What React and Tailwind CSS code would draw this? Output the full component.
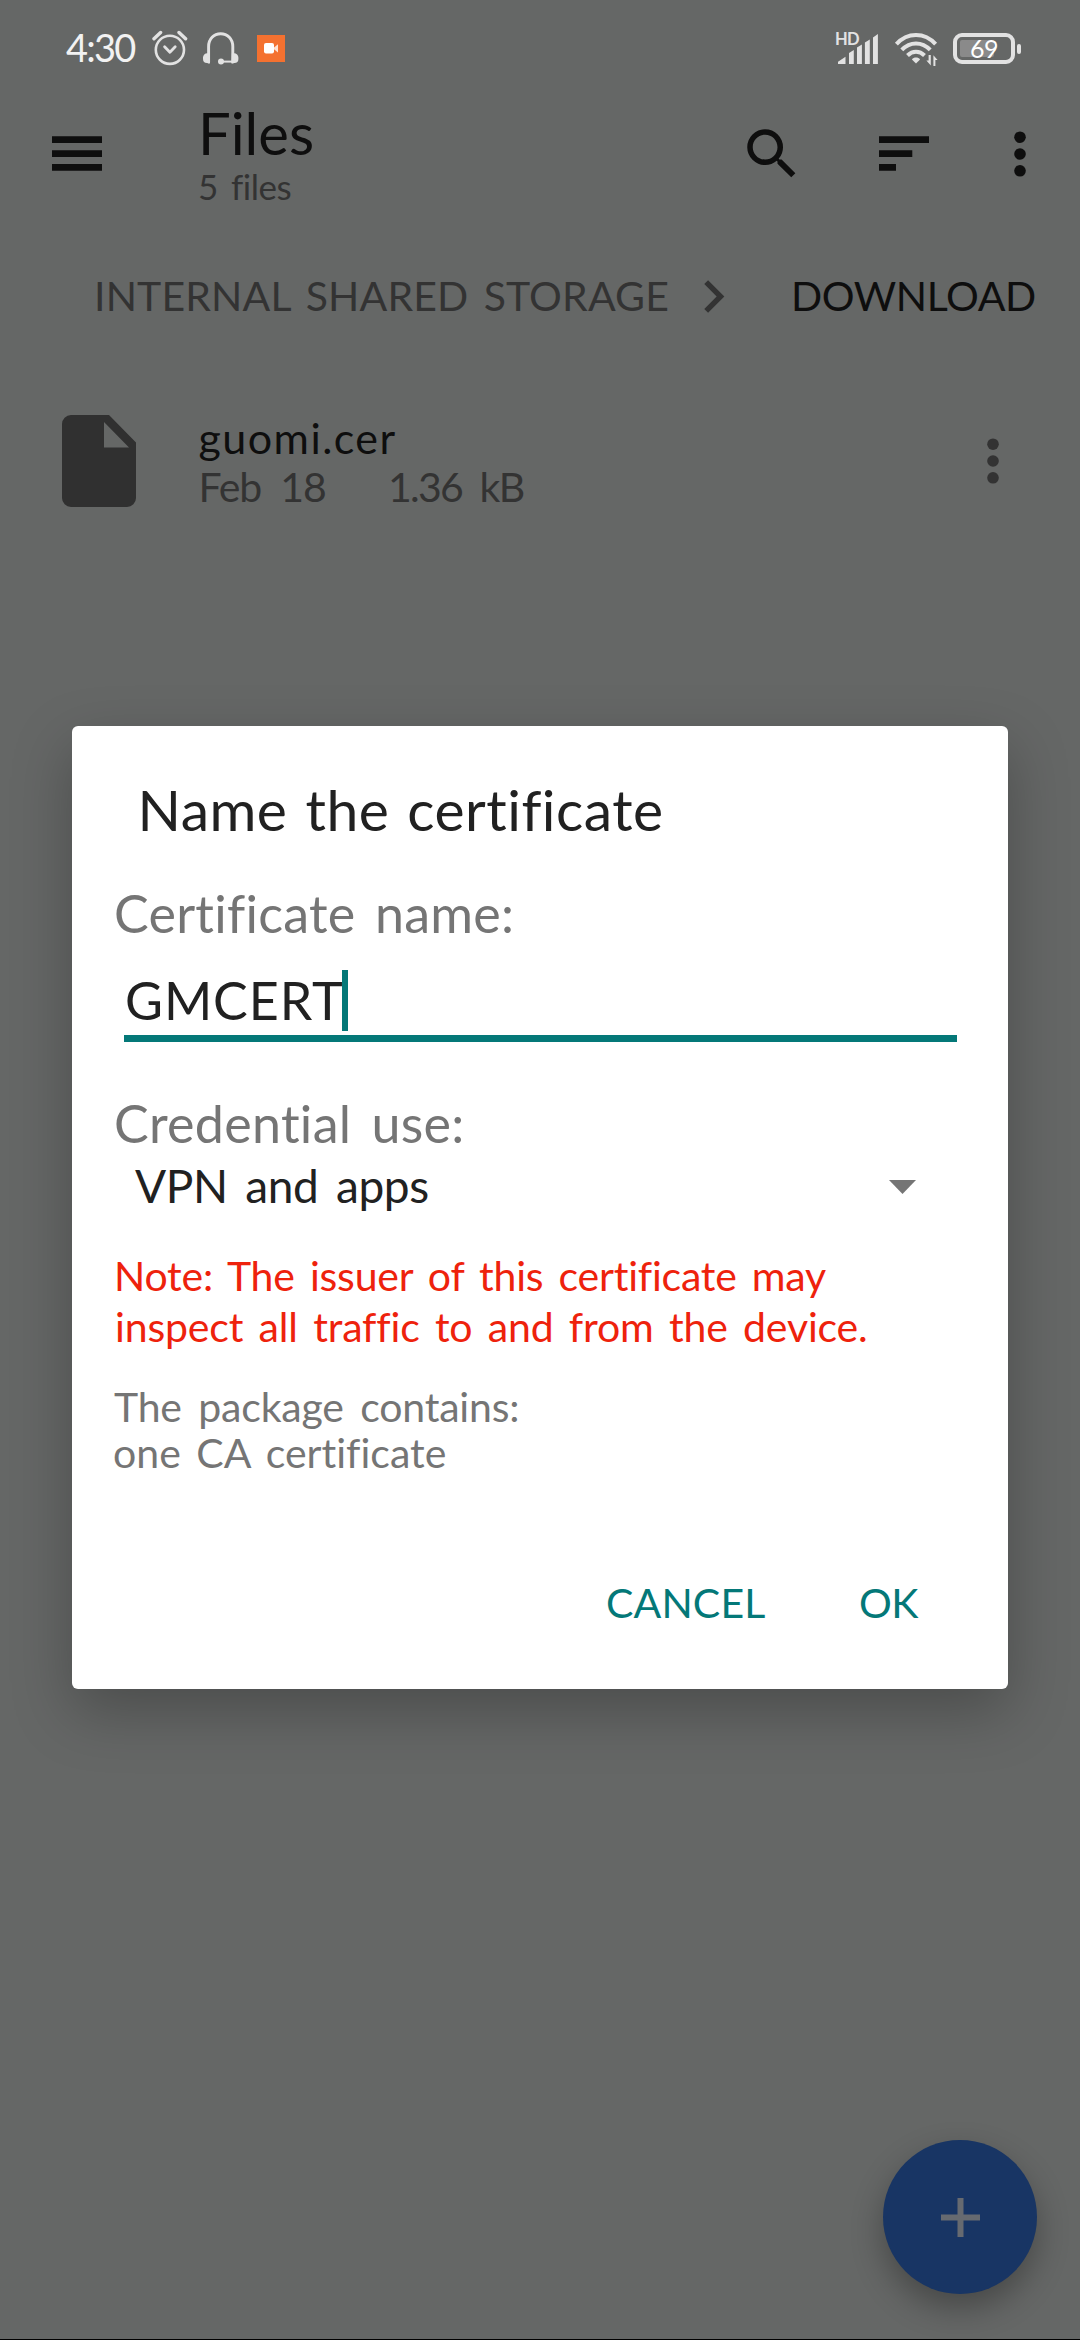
import React from "react";

function AlarmIcon() {
  return (
    <svg className="ml-[17px] shrink-0" width="36" height="38" viewBox="152 31 36 38" fill="none" stroke="#e2e2e2">
      <circle cx="169.9" cy="50.8" r="14.1" strokeWidth="2.6" />
      <path d="M164.6 47.8l5.3 5.4 5.3-5.4" strokeWidth="2.8" strokeLinecap="round" strokeLinejoin="round" />
      <path d="M154 39.8l6.6-6.3M185.6 39.8l-6.6-6.3" strokeWidth="3.4" strokeLinecap="round" />
    </svg>
  );
}

function HeadsetIcon() {
  return (
    <svg className="ml-[15px] shrink-0" width="36" height="36" viewBox="203 31 36 36" fill="none" stroke="#e2e2e2">
      <path d="M208.6 62V46.5c0-7.5 5.3-12.8 12.1-12.8s12.1 5.3 12.1 12.8V62" strokeWidth="2.9" strokeLinecap="round" />
      <path d="M209.5 53.3h-2.2a4.3 4.3 0 0 0-4.3 4.3v1.4a4 4 0 0 0 4 4l3 .6zM231.9 53.3h2.2a4.3 4.3 0 0 1 4.3 4.3v1.4a4 4 0 0 1-4 4l-3 .6z" fill="#e2e2e2" stroke="none" />
      <path d="M221 61.6h13" strokeWidth="2" />
      <circle cx="221" cy="61.6" r="3" fill="#e2e2e2" stroke="none" />
    </svg>
  );
}

function RecorderIcon() {
  return (
    <span className="ml-[18px] flex h-[27px] w-[28px] shrink-0 items-center justify-center bg-[#f47130]">
      <svg width="14" height="11" viewBox="0 0 14 11">
        <rect x="0" y="0" width="10" height="10.6" rx="2" fill="#fff" />
        <path d="M10 4.6l4-3.4v8.4l-4-3.4z" fill="#ffe3d4" />
      </svg>
    </span>
  );
}

function SignalIcon() {
  return (
    <svg width="42" height="36" viewBox="838 30 42 36" fill="#e2e2e2">
      <path d="M839 63v-2.200l7.500-5V63zM850 63V52l4.800-3v14zM858 63V46.600l4.900-3V63zM865.900 63V41.600l4.900-3.200V63zM874 63V36.400l4.900-3.400V63z" />
    </svg>
  );
}

function WifiIcon() {
  return (
    <svg className="ml-[15px] shrink-0" width="44" height="38" viewBox="894 31 44 38" fill="none" stroke="#e2e2e2" strokeWidth="4">
      <path d="M896.4 45.2c11-12.2 28.2-12.2 39.2 0" />
      <path d="M901.8 50.9c8.2-8.7 20.2-8.7 28.4 0" />
      <path d="M907.5 56.5c5-5 12-5 17 0" />
      <path d="M916 64.600l-4.100-4.200c1.900-2.400 6.300-2.400 8.200 0z" fill="#e2e2e2" stroke="none" />
      <path d="M930.8 56v10.500l-4.400-5h2.200V56zM933.400 66.900V56.200l4.200 4.800h-2.200v5.900z" fill="#e2e2e2" stroke="none" />
    </svg>
  );
}

function Battery() {
  return (
    <span className="ml-[15px] flex shrink-0 items-center">
      <span className="relative flex h-[31px] w-[62px] items-center justify-center rounded-[9px] border-4 border-[#e2e2e2]">
        <span className="absolute left-[3px] top-[3px] h-[17px] w-[34px] rounded-[2px] bg-[#8a8a8a]" />
        <span className="relative text-[25px] leading-[23px] tracking-[-0.6px] text-white">69</span>
      </span>
      <span className="ml-[2px] h-[10px] w-[4px] rounded-[2px] bg-[#e2e2e2]" />
    </span>
  );
}

function StatusBar() {
  return (
    <div className="flex h-[97px] items-center pl-[66px] pr-[59px]">
      <span className="w-[69px] pb-[3px] text-[38px] leading-[44px] tracking-[-1.8px] text-[#f2f2f2]">4:30</span>
      <AlarmIcon />
      <HeadsetIcon />
      <RecorderIcon />
      <span className="relative ml-auto">
        <SignalIcon />
        <span className="absolute left-[-2px] top-[-2px] text-[16.5px] font-bold leading-[20px] tracking-[-0.8px] text-[#e2e2e2]">HD</span>
      </span>
      <WifiIcon />
      <Battery />
    </div>
  );
}

function MoreIcon({ className }) {
  return (
    <svg className={className} width="12" height="46" viewBox="0 0 12 46" fill="currentColor">
      <circle cx="6" cy="6.2" r="5.8" />
      <circle cx="6" cy="23" r="5.8" />
      <circle cx="6" cy="39.8" r="5.8" />
    </svg>
  );
}

function AppBar() {
  return (
    <div className="flex h-[113px] items-center pl-[52px] pr-[54px] text-[#0e0e0e]">
      <svg width="50" height="35" viewBox="0 0 50 35" fill="currentColor">
        <path d="M0 0.3h50v6.8H0zM0 14.2h50v6.8H0zM0 27.9h50v6.8H0z" />
      </svg>
      <div className="ml-[96px] self-start pt-[6px]">
        <div className="text-[58px] leading-[60px]">Files</div>
        <div className="mt-[3px] text-[35px] leading-[40px] tracking-[-0.48px] text-[#333] [word-spacing:4.7px]">5 files</div>
      </div>
      <svg className="ml-auto" width="66" height="66" viewBox="0 0 24 24" fill="currentColor">
        <path d="M15.5 14h-.79l-.28-.27A6.471 6.471 0 0 0 16 9.5 6.5 6.5 0 1 0 9.5 16c1.61 0 3.09-.59 4.23-1.57l.27.28v.79l5 4.99L20.49 19l-4.990-5zm-6 0C7.010 14 5 11.990 5 9.500S7.010 5 9.500 5 14 7.010 14 9.500 11.990 14 9.500 14z" />
      </svg>
      <svg className="ml-[74px]" width="50" height="35" viewBox="0 0 50 35" fill="currentColor">
        <path d="M0 0.3h50v6.8H0zM0 14.2h33.3v6.8H0zM0 27.9h17v6.8H0z" />
      </svg>
      <MoreIcon className="ml-[85px]" />
    </div>
  );
}

function Breadcrumb() {
  return (
    <div className="mt-[56px] flex h-[60px] items-center pl-[94px] text-[41px] leading-[60px] text-[#333]">
      <span className="w-[587px] whitespace-nowrap tracking-[0.15px] [word-spacing:4.6px]">INTERNAL SHARED STORAGE</span>
      <svg className="shrink-0" width="65" height="65" viewBox="0 0 24 24" fill="currentColor">
        <path d="M10 6 8.59 7.41 13.17 12l-4.58 4.59L10 18l6-6z" />
      </svg>
      <span className="ml-[45px] tracking-[-0.4px] text-[#0e0e0e]">DOWNLOAD</span>
    </div>
  );
}

function FileRow() {
  return (
    <div className="mt-[86px] flex h-[98px] items-center pl-[62px] pr-[81px] text-[#333]">
      <svg width="74" height="92" viewBox="0 0 74 92" fill="#303030" fillRule="evenodd">
        <path d="M9 0H47L74 27.5V83a9 9 0 0 1-9 9H9a9 9 0 0 1-9-9V9a9 9 0 0 1 9-9zM42 7v25.500H67z" />
      </svg>
      <div className="ml-[62.5px] pt-[2px]">
        <div className="text-[43px] leading-[50px] tracking-[1.45px] text-[#0e0e0e]">guomi.cer</div>
        <div className="flex text-[41px] leading-[48px]">
          <span className="w-[189.600px] tracking-[-1.18px] [word-spacing:10px]">Feb 18</span>
          <span className="tracking-[-1.75px] [word-spacing:8.7px]">1.36 kB</span>
        </div>
      </div>
      <MoreIcon className="ml-auto" />
    </div>
  );
}

function CertificateDialog() {
  return (
    <div className="absolute left-[72px] top-[726px] flex h-[963px] w-[936px] flex-col rounded-[6px] bg-white pl-[42px] text-[#212121] shadow-[0_22px_60px_rgba(0,0,0,0.26)]">
      <h1 className="ml-[23.5px] mt-[48px] text-[57px] leading-[70px] tracking-[0.48px] [word-spacing:3px]">
        Name the certificate
      </h1>
      <div className="mt-[39px] text-[52px] leading-[60px] tracking-[0.25px] text-[#757575] [word-spacing:5.9px]">Certificate name:</div>
      <div className="ml-[10px] mt-[25px] flex h-[73.5px] w-[833px] items-start border-b-[7px] border-[#047878]">
        <span className="ml-px w-[217px] pt-[1.5px] text-[52px] leading-[60px] tracking-[0.92px]">GMCERT</span>
        <span className="mt-[1.5px] h-[61px] w-[6px] bg-[#047878]" />
      </div>
      <div className="mt-[51px] text-[52px] leading-[60px] tracking-[0.3px] text-[#757575] [word-spacing:6.45px]">Credential use:</div>
      <div className="ml-[21px] mt-[3.500px] flex items-center justify-between pr-[92px] text-[46px] leading-[60px]">
        <span className="tracking-[-0.43px] [word-spacing:6.4px]">VPN and apps</span>
        <svg className="mt-[2px]" width="27" height="14" viewBox="0 0 27 14" fill="#757575">
          <path d="M0 0h27L13.5 14z" />
        </svg>
      </div>
      <div className="mt-[34px] whitespace-nowrap text-[41px] leading-[51.3px] text-[#ee220c]">
        <span className="block tracking-[-0.22px] [word-spacing:4.98px]">Note: The issuer of this certificate may</span>
        <span className="ml-px block tracking-[-0.16px] [word-spacing:5px]">inspect all traffic to and from the device.</span>
      </div>
      <div className="mt-[31px] text-[41px] leading-[46.7px] text-[#757575]">
        <span className="block tracking-[-0.19px] [word-spacing:6.16px]">The package contains:</span>
        <span className="-ml-[1px] block tracking-[0.02px] [word-spacing:5px]">one CA certificate</span>
      </div>
      <div className="mt-[101px] flex text-[41px] leading-[50px] text-[#047878]">
        <span className="ml-[492px] w-[253px] tracking-[0.14px]">CANCEL</span>
        <span className="tracking-[-0.6px]">OK</span>
      </div>
    </div>
  );
}

function AddButton() {
  return (
    <div className="absolute left-[883px] top-[2140px] flex size-[154px] items-center justify-center rounded-full bg-[#183564] shadow-[0_14px_32px_rgba(0,0,0,0.3)]">
      <svg width="39" height="39" viewBox="0 0 39 39" fill="#666a70">
        <path d="M16.5 0h6v16.500H39v6H22.500V39h-6V22.500H0v-6h16.500z" />
      </svg>
    </div>
  );
}

export default function App() {
  return (
    <div className="relative flex h-[2340px] w-[1080px] flex-col overflow-hidden border-b border-black bg-[#656766] font-['Lato',sans-serif]">
      <StatusBar />
      <AppBar />
      <Breadcrumb />
      <FileRow />
      <AddButton />
      <CertificateDialog />
    </div>
  );
}
